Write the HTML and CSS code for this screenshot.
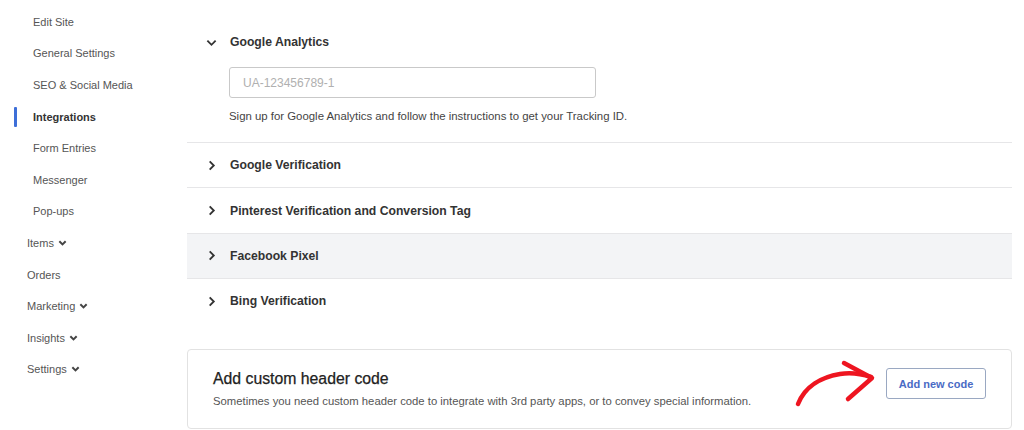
FILE: index.html
```html
<!DOCTYPE html>
<html>
<head>
<meta charset="utf-8">
<link rel="stylesheet" href="styles.css">
</head>
<body>
<div class="page">
  <nav class="sidebar">
    <a class="nav-item sub">Edit Site</a>
    <a class="nav-item sub">General Settings</a>
    <a class="nav-item sub">SEO &amp; Social Media</a>
    <a class="nav-item sub active">Integrations</a>
    <a class="nav-item sub">Form Entries</a>
    <a class="nav-item sub">Messenger</a>
    <a class="nav-item sub">Pop-ups</a>
    <a class="nav-item">Items <svg class="caret" viewBox="0 0 10 8"><path d="M1.5 2l3.5 3.5L8.5 2" /></svg></a>
    <a class="nav-item">Orders</a>
    <a class="nav-item">Marketing <svg class="caret" viewBox="0 0 10 8"><path d="M1.5 2l3.5 3.5L8.5 2" /></svg></a>
    <a class="nav-item">Insights <svg class="caret" viewBox="0 0 10 8"><path d="M1.5 2l3.5 3.5L8.5 2" /></svg></a>
    <a class="nav-item">Settings <svg class="caret" viewBox="0 0 10 8"><path d="M1.5 2l3.5 3.5L8.5 2" /></svg></a>
  </nav>
  <main class="main">
    <section class="acc expanded">
      <div class="acc-head">
        <svg class="chev" viewBox="0 0 12 12"><path d="M1.5 4l4.5 4.5L10.5 4" /></svg>
        <span class="acc-title">Google Analytics</span>
      </div>
      <div class="acc-body">
        <div class="input">UA-123456789-1</div>
        <p class="help">Sign up for Google Analytics and follow the instructions to get your Tracking ID.</p>
      </div>
    </section>
    <section class="acc">
      <div class="acc-head">
        <svg class="chev" viewBox="0 0 12 12"><path d="M4 1.5l4.5 4.5L4 10.5" /></svg>
        <span class="acc-title">Google Verification</span>
      </div>
    </section>
    <section class="acc">
      <div class="acc-head">
        <svg class="chev" viewBox="0 0 12 12"><path d="M4 1.5l4.5 4.5L4 10.5" /></svg>
        <span class="acc-title">Pinterest Verification and Conversion Tag</span>
      </div>
    </section>
    <section class="acc hover">
      <div class="acc-head">
        <svg class="chev" viewBox="0 0 12 12"><path d="M4 1.5l4.5 4.5L4 10.5" /></svg>
        <span class="acc-title">Facebook Pixel</span>
      </div>
    </section>
    <section class="acc last">
      <div class="acc-head">
        <svg class="chev" viewBox="0 0 12 12"><path d="M4 1.5l4.5 4.5L4 10.5" /></svg>
        <span class="acc-title">Bing Verification</span>
      </div>
    </section>
    <div class="card">
      <div class="card-text">
        <h2 class="card-title">Add custom header code</h2>
        <p class="card-desc">Sometimes you need custom header code to integrate with 3rd party apps, or to convey special information.</p>
      </div>
      <button class="btn">Add new code</button>
    </div>
  </main>
</div>
<svg class="arrow" viewBox="0 0 1024 430" width="1024" height="430">
  <path d="M798 404 C805 386 822 377 840 374 C852 372 862 374 871 377" />
  <path d="M844 363 L872 378 L848 399" />
</svg>
</body>
</html>
```

FILE: styles.css
```css
* { box-sizing: border-box; }
html, body { margin: 0; padding: 0; background: #fff; }
body {
  font-family: "Liberation Sans", Arial, sans-serif;
  color: #333;
  width: 1024px;
  height: 430px;
  overflow: hidden;
  position: relative;
}
.page { display: flex; }
.sidebar {
  width: 187px;
  flex: none;
  display: flex;
  flex-direction: column;
  padding-top: 6px;
}
.nav-item {
  position: relative;
  display: flex;
  align-items: center;
  height: 31.6px;
  padding-left: 27px;
  font-size: 11px;
  color: #555;
}
.nav-item.sub { padding-left: 33px; }
.nav-item.active { font-weight: bold; color: #333; }
.nav-item.active::before {
  content: "";
  position: absolute;
  left: 14px;
  top: 6px;
  width: 3px;
  height: 20px;
  border-radius: 1px;
  background: #3e6fd8;
}
.caret {
  width: 9px;
  height: 8px;
  margin-left: 4px;
  fill: none;
  stroke: #444;
  stroke-width: 2.2;
}
.main {
  flex: 1;
  padding-right: 12px;
  display: flex;
  flex-direction: column;
}
.acc { border-bottom: 1px solid #e6e6e8; }
.acc.last { border-bottom: none; }
.acc.hover { background: #f3f4f6; }
.acc-head {
  height: 44.4px;
  display: flex;
  align-items: center;
  padding-left: 19px;
  gap: 13px;
}
.expanded .acc-head { height: 40px; margin-top: 22px; }
.chev {
  width: 11px;
  height: 11px;
  fill: none;
  stroke: #333;
  stroke-width: 2;
}
.acc-title {
  font-size: 12.2px;
  font-weight: bold;
  color: #333;
}
.acc-body { padding: 5px 0 20px 42px; }
.input {
  width: 367px;
  height: 31px;
  border: 1px solid #c9c9c9;
  border-radius: 3px;
  font-size: 12px;
  color: #b0b0b0;
  display: flex;
  align-items: center;
  padding-left: 13px;
}
.help {
  margin: 12px 0 0;
  font-size: 11.4px;
  color: #444;
}
.card {
  margin-top: 25px;
  height: 80px;
  border: 1px solid #e2e2e2;
  border-radius: 4px;
  display: flex;
  align-items: center;
  justify-content: space-between;
  padding: 0 25px 0 25px;
}
.card-title {
  margin: 0;
  font-size: 15.8px;
  font-weight: normal;
  color: #222;
  -webkit-text-stroke: 0.25px #222;
}
.card-desc {
  margin: 7px 0 0;
  font-size: 11.3px;
  color: #555;
}
.btn {
  width: 100px;
  height: 31px;
  border: 1px solid #9aa8c2;
  border-radius: 3px;
  background: #fff;
  font-family: inherit;
  font-size: 11px;
  font-weight: bold;
  color: #4a6bc5;
  margin-top: -10px;
}
.arrow {
  position: absolute;
  left: 0;
  top: 0;
  pointer-events: none;
  fill: none;
  stroke: #ee1520;
  stroke-width: 4.5;
  stroke-linecap: round;
  stroke-linejoin: round;
}
```
